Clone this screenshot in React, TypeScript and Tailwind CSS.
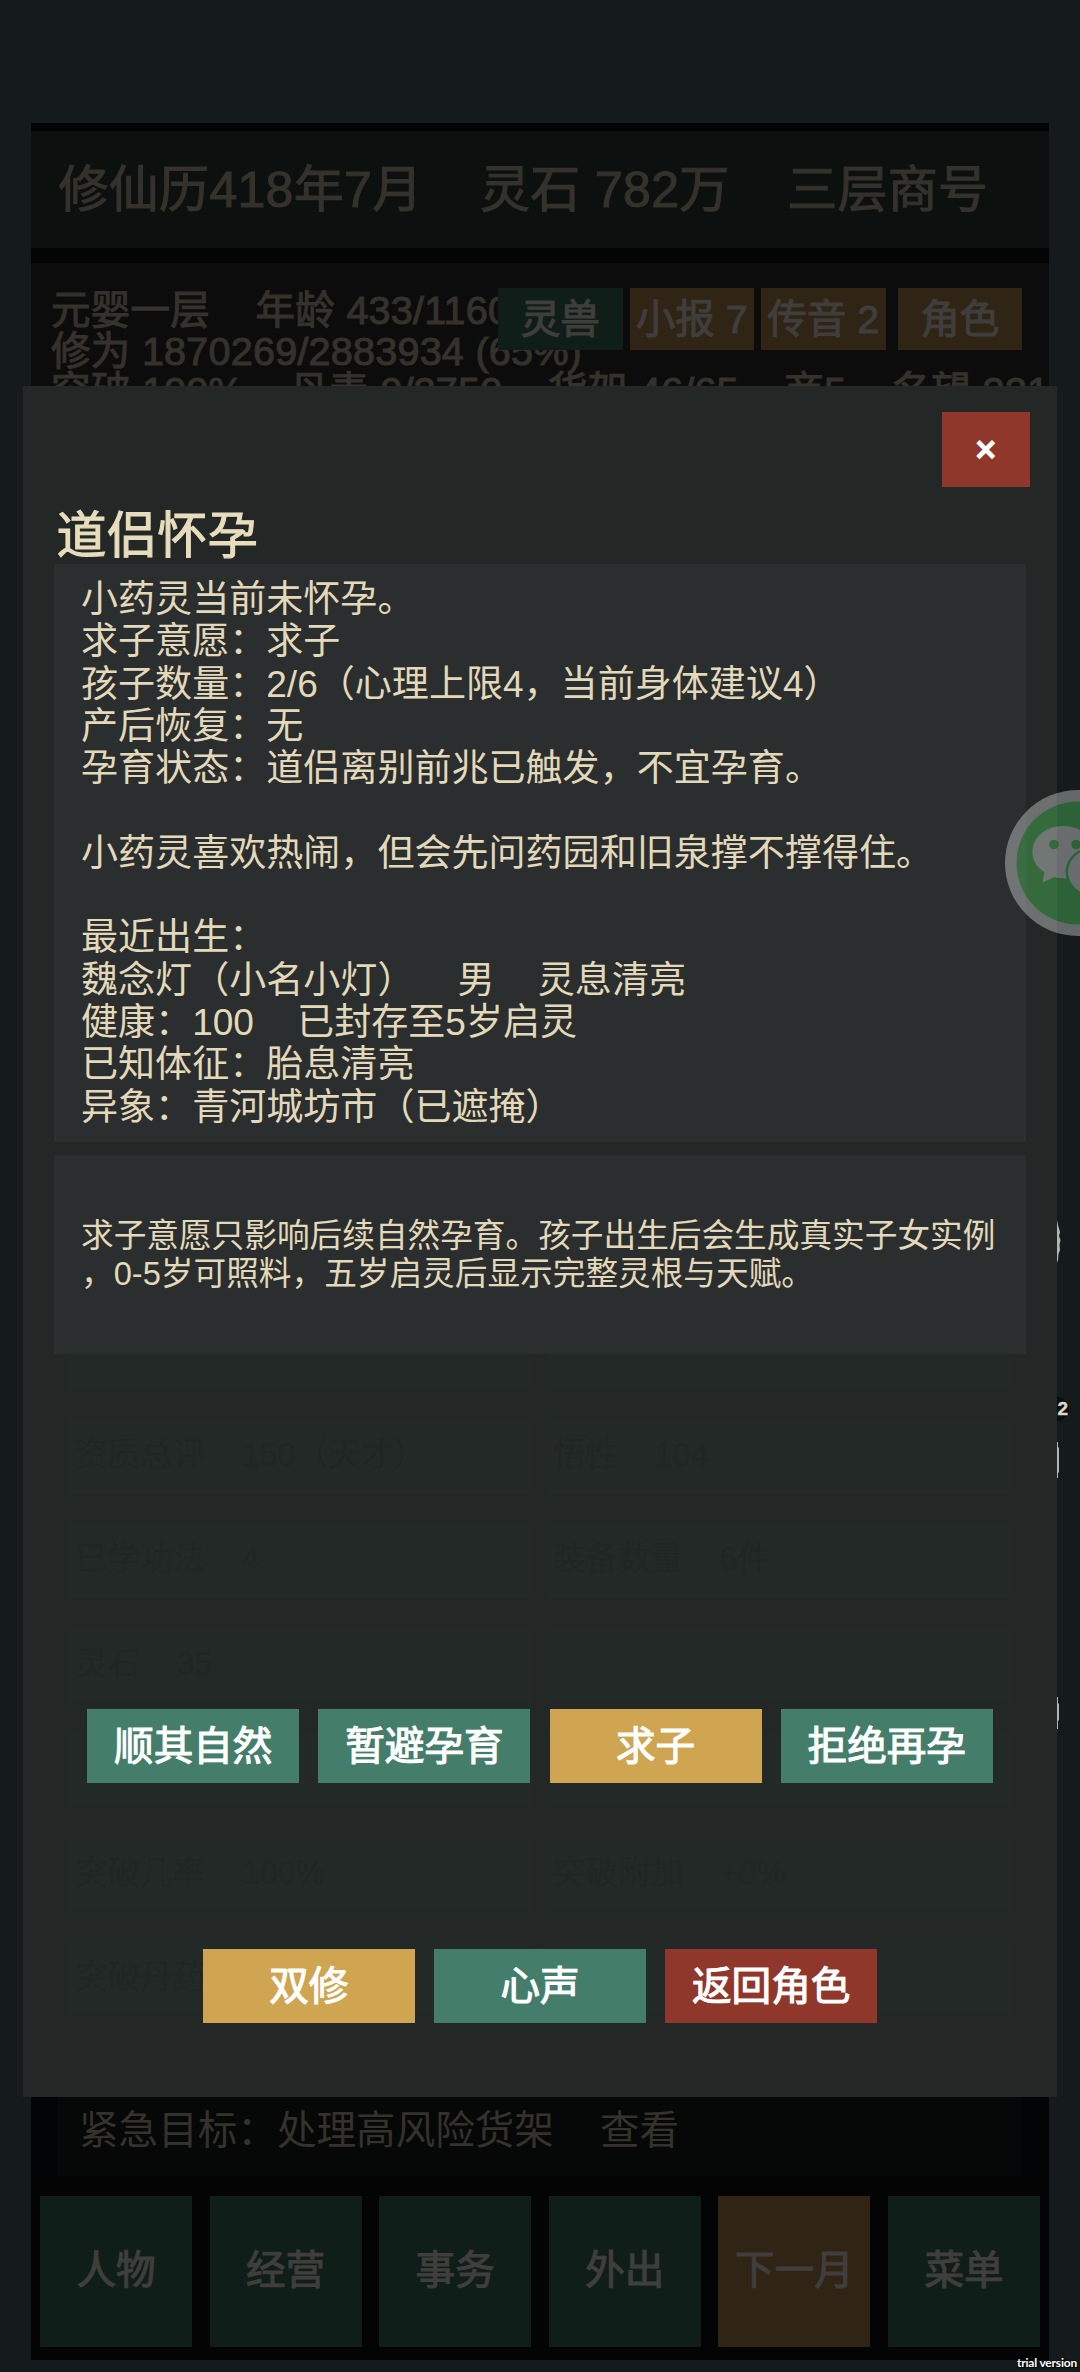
import React from "react";

type Tone = "teal" | "gold" | "red";

const tones: Record<Tone, string> = {
  teal: "bg-[#447e6b]",
  gold: "bg-[#cfa551]",
  red: "bg-[#8f372b]",
};

const stroke = "[-webkit-text-stroke:1.1px_currentColor]";

function DimButton({ label, gold, className }: { label: string; gold?: boolean; className: string }) {
  return (
    <button
      className={`flex shrink-0 items-center justify-center whitespace-pre text-[39.6px] leading-[40px] text-[#3f3e3d] ${stroke} ${
        gold ? "bg-[#302414]" : "bg-[#0f1e19]"
      } ${className}`}
    >
      {label}
    </button>
  );
}

function ActionButton({ label, tone }: { label: string; tone: Tone }) {
  return (
    <button
      className={`flex h-[74px] w-[212px] shrink-0 items-center justify-center whitespace-pre text-[39.6px] leading-[40px] text-white ${stroke} ${tones[tone]}`}
    >
      {label}
    </button>
  );
}

const statusLines = [
  "小药灵当前未怀孕。",
  "求子意愿：求子",
  "孩子数量：2/6（心理上限4，当前身体建议4）",
  "产后恢复：无",
  "孕育状态：道侣离别前兆已触发，不宜孕育。",
  " ",
  "小药灵喜欢热闹，但会先问药园和旧泉撑不撑得住。",
  " ",
  "最近出生：",
  "魏念灯（小名小灯）    男    灵息清亮",
  "健康：100    已封存至5岁启灵",
  "已知体征：胎息清亮",
  "异象：青河城坊市（已遮掩）",
];

const attributes: [string, string][] = [
  ["", ""],
  ["资质总评    150（天才）", "悟性    104"],
  ["已学功法    4", "装备数量    6件"],
  ["灵石    35", ""],
  ["", ""],
  ["突破几率    100%", "突破附加    +0%"],
  ["突破丹药", ""],
];

function Header() {
  return (
    <header className={`mt-2 flex h-[117px] items-center whitespace-pre bg-[#0c110f] pl-[27.5px] text-[50px] leading-[50px] tracking-[0.3px] text-[#35312b] [word-spacing:0.2px] ${stroke}`}>
      {"修仙历418年7月    灵石 782万    三层商号"}
    </header>
  );
}

function Stats() {
  return (
    <section className="relative mt-[15px] h-[200px] bg-[#0b0c0b] pl-5 pt-[27px]">
      <div className={`w-[998px] overflow-hidden whitespace-pre text-[39.6px] leading-[40.7px] tracking-[0.2px] text-[#35312b] [word-spacing:0.15px] ${stroke}`}>
        <p>{"元婴一层    年龄 433/1160"}</p>
        <p>{"修为 1870269/2883934 (65%)"}</p>
        <p>{"突破 100%    丹毒 0/2750    货架 46/65    商5    名望 221"}</p>
      </div>
      <div className="absolute right-[27px] top-[25px] flex">
        <DimButton label="灵兽" className="mr-[7px] h-[62px] w-[124.5px]" />
        <DimButton label="小报 7" gold className="mr-[7px] h-[62px] w-[124.5px]" />
        <DimButton label="传音 2" gold className="mr-3 h-[62px] w-[124.5px]" />
        <DimButton label="角色" gold className="h-[62px] w-[124.5px]" />
      </div>
    </section>
  );
}

function Modal() {
  return (
    <div className="absolute left-[23px] top-[386px] flex h-[1711px] w-[1034px] flex-col bg-[#232826]">
      <div className="absolute inset-x-[46px] top-[930px] grid grid-cols-[461px_463px] gap-x-[17px] gap-y-[32.5px]">
        {attributes.flat().map((text, i) => (
          <div
            key={i}
            className="flex h-[72px] items-center whitespace-pre bg-[#232927] pb-[3px] pl-[6px] text-[32.6px] text-[#202624]"
          >
            {text}
          </div>
        ))}
      </div>
      <div className="relative flex h-full flex-col">
        <button className="ml-auto mr-[27px] mt-[26px] flex h-[75px] w-[88.5px] items-center justify-center bg-[#8f372b] text-[36px] leading-[36px] text-white [-webkit-text-stroke:2px_white]">
          ×
        </button>
        <h2 className={`ml-[33.5px] mt-[24px] text-[50px] leading-[50px] tracking-[0.4px] text-[#e7dcbc] ${stroke}`}>道侣怀孕</h2>
        <div className="ml-[31px] mt-[3px] flex h-[578px] w-[971.5px] flex-col justify-center whitespace-pre bg-[#2a2e2f] pl-[27px] text-[37.05px] leading-[42.3px] text-[#e3d9ba] [word-spacing:0.5px]">
          {statusLines.map((line, i) => (
            <p key={i}>{line}</p>
          ))}
        </div>
        <div className="ml-[31px] mt-[13px] flex h-[199px] w-[971.5px] flex-col justify-center whitespace-pre bg-[#2a2e2f] pl-[27px] text-[32.66px] leading-[37.6px] text-[#e3d9ba]">
          <p>求子意愿只影响后续自然孕育。孩子出生后会生成真实子女实例</p>
          <p>，0-5岁可照料，五岁启灵后显示完整灵根与天赋。</p>
        </div>
        <div className="mt-[355px] flex justify-center gap-[19.2px]">
          <ActionButton label="顺其自然" tone="teal" />
          <ActionButton label="暂避孕育" tone="teal" />
          <ActionButton label="求子" tone="gold" />
          <ActionButton label="拒绝再孕" tone="teal" />
        </div>
        <div className="mt-[166px] flex justify-center gap-[19.2px]">
          <ActionButton label="双修" tone="gold" />
          <ActionButton label="心声" tone="teal" />
          <ActionButton label="返回角色" tone="red" />
        </div>
      </div>
    </div>
  );
}

function Footer() {
  return (
    <footer className="mt-auto">
      <div className="ml-[26px] flex h-[79px] w-[964px] items-start whitespace-pre bg-[#050807] pl-[22px] pt-[13px] text-[39.6px] leading-[40px] text-[#35312b] [word-spacing:0.5px]">
        {"紧急目标：处理高风险货架    查看"}
      </div>
      <nav className="mt-[5px] flex gap-[17.6px] bg-[#040405] px-[9px] pb-[13px] pt-[15px]">
        {["人物", "经营", "事务", "外出", "下一月", "菜单"].map((label) => (
          <DimButton key={label} label={label} gold={label === "下一月"} className="h-[151px] w-[152px] pb-[3px]" />
        ))}
      </nav>
    </footer>
  );
}

function ChatBubble() {
  return (
    <svg className="absolute left-[1005px] top-[790px] opacity-40" width="75" height="146" viewBox="0 0 75 146">
      <circle cx="73" cy="73" r="73" fill="#dadddd" />
      <circle cx="73" cy="73" r="61.5" fill="#52cd61" />
      <path
        d="M58 36C41 36 27.500 47 27.500 62C27.500 70.500 32 77.500 39.500 82L37.500 92.500L49.500 87C52 87.800 55 88.400 61 88.400C78 88.400 90 77 90 62C90 47 75 36 58 36Z"
        fill="#e8eaea"
      />
      <circle cx="49" cy="54.500" r="4.800" fill="#52cd61" />
      <circle cx="71" cy="54.500" r="4.800" fill="#52cd61" />
      <ellipse cx="89" cy="82" rx="28.500" ry="25.500" fill="#52cd61" />
      <ellipse cx="89" cy="82" rx="26" ry="23" fill="#e8eaea" />
    </svg>
  );
}

export default function App() {
  return (
    <div className='relative h-[2372px] w-[1080px] overflow-hidden bg-[#151a1d] pt-[123px] font-["Liberation_Sans","Noto_Sans_CJK_SC",sans-serif]'>
      <main className="ml-[31px] flex h-[2237px] w-[1018px] flex-col overflow-hidden bg-[#020405]">
        <Header />
        <Stats />
        <Footer />
      </main>

      <svg className="absolute left-[1057px] top-[1210px]" width="6" height="530" viewBox="0 0 6 530" fill="#b4b6b6">
        <path d="M0 10L1.500 17L3 22L2 26L3.500 30L2.500 35L3 40L1.500 44L1 50L0 53Z" />
        <path d="M0 232L1 232L1 237L2 238L2 262L1 263L1 268L0 268Z" />
        <path d="M0 487L1 487L1 493L2 494L2 510L1 511L1 519L0 519Z" />
      </svg>
      <span className="absolute left-[1045px] top-[1397px] flex h-6 w-6 items-center justify-end rounded-full bg-[#0b0e0f] pr-px text-[19px] font-bold leading-6 text-[#ddd8c4] [-webkit-text-stroke:0.4px_currentColor]">
        2
      </span>

      <Modal />
      <ChatBubble />
      <span className="absolute right-[3px] top-[2355px] font-[Lato] text-[12px] font-bold leading-4 tracking-[-0.2px] text-white [text-shadow:0_0_2px_#000,1px_1px_1px_#000]">
        trial version
      </span>
    </div>
  );
}
